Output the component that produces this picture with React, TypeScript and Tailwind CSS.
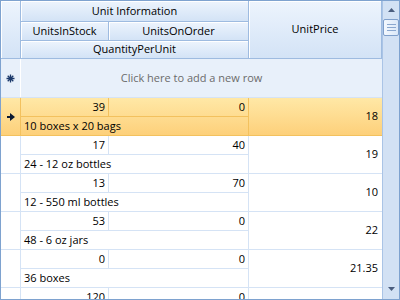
import type { ReactNode } from "react";

type Row = { stock: string; order: string; qty: string; price: string; selected?: boolean };

const rows: Row[] = [
  { stock: "39", order: "0", qty: "10 boxes x 20 bags", price: "18", selected: true },
  { stock: "17", order: "40", qty: "24 - 12 oz bottles", price: "19" },
  { stock: "13", order: "70", qty: "12 - 550 ml bottles", price: "10" },
  { stock: "53", order: "0", qty: "48 - 6 oz jars", price: "22" },
  { stock: "0", order: "0", qty: "36 boxes", price: "21.35" },
  { stock: "120", order: "0", qty: "12 - 8 oz jars", price: "25" },
];

function HeaderCell({ children, className = "" }: { children?: ReactNode; className?: string }) {
  return (
    <div
      className={`flex items-center justify-center border-r border-b border-[#9ebbe0] bg-gradient-to-b from-[#edf4fd] to-[#d3e3f6] shadow-[inset_1px_1px_0_#ffffff] ${className}`}
    >
      {children}
    </div>
  );
}

function Arrow() {
  return (
    <svg width="8" height="8" viewBox="0 0 8 8">
      <path d="M0 3h3V0l5 4-5 4V5H0z" fill="#0b1a33" />
    </svg>
  );
}

function Star() {
  return (
    <svg width="9" height="9" viewBox="0 0 9 9">
      <path
        d="M4.5 0.5v8M0.5 4.5h8M1.7 1.7l5.6 5.6M7.3 1.7l-5.6 5.6"
        stroke="#1c3a6b"
        strokeWidth="1.3"
      />
      <circle cx="4.5" cy="4.5" r="1.6" fill="#1c3a6b" />
    </svg>
  );
}

function DataRow({ row }: { row: Row }) {
  const sel = row.selected;
  const line = sel ? "border-[#f3c15e]" : "border-[#d5e3f5]";
  return (
    <div
      className={`grid h-[38px] shrink-0 grid-cols-[20px_88px_140px_133px] border-b ${line} ${
        sel ? "bg-gradient-to-b from-[#ffe8a6] to-[#fdd07a]" : "bg-white"
      }`}
    >
      <div className={`flex items-center justify-center border-r ${line}`}>{sel && <Arrow />}</div>
      <div className={`col-span-2 flex flex-col border-r ${line}`}>
        <div className={`flex h-[19px] border-b ${line}`}>
          <div className={`flex w-[88px] items-center justify-end border-r pr-[3px] ${line}`}>{row.stock}</div>
          <div className="flex flex-1 items-center justify-end pr-[3px]">{row.order}</div>
        </div>
        <div className="flex flex-1 items-center pl-[3px]">{row.qty}</div>
      </div>
      <div className="flex items-center justify-end pr-[4px]">{row.price}</div>
    </div>
  );
}

export default function App() {
  return (
    <div className="flex h-[300px] w-[400px] overflow-hidden border border-[#7ea2cf] font-['Segoe_UI','Open_Sans',sans-serif] text-[11px] text-black">
      <div className="flex w-[381px] flex-col">
        {/* Header */}
        <div className="grid shrink-0 grid-cols-[20px_88px_140px_133px] grid-rows-[21px_19px_18px]">
          <HeaderCell className="row-span-3" />
          <HeaderCell className="col-span-2">Unit Information</HeaderCell>
          <HeaderCell className="row-span-3">UnitPrice</HeaderCell>
          <HeaderCell>UnitsInStock</HeaderCell>
          <HeaderCell>UnitsOnOrder</HeaderCell>
          <HeaderCell className="col-span-2">QuantityPerUnit</HeaderCell>
        </div>

        {/* New row */}
        <div className="grid h-[39px] shrink-0 grid-cols-[20px_1fr] border-b border-[#d5e3f5] bg-[#e8f0fa]">
          <div className="flex items-center justify-center border-r border-white">
            <Star />
          </div>
          <div className="flex items-center justify-center pr-[20px] text-[#6b6b6b]">Click here to add a new row</div>
        </div>

        {rows.map((r) => (
          <DataRow key={r.qty} row={r} />
        ))}
      </div>

      {/* Scrollbar */}
      <div className="flex w-[17px] flex-col items-center border-l border-[#aac4e6] bg-[#d2e1f4]">
        <div className="flex h-[18px] items-center justify-center">
          <svg width="7" height="4" viewBox="0 0 7 4">
            <path d="M3.5 0L7 4H0z" fill="#4a5d7e" />
          </svg>
        </div>
        <div className="flex h-[17px] w-[16px] flex-col items-center justify-center gap-[2px] rounded-[2px] border border-[#7f9fcb] bg-gradient-to-r from-[#f3f8fe] to-[#dbe8f8]">
          <div className="h-px w-[9px] bg-[#8aa7cf]" />
          <div className="h-px w-[9px] bg-[#8aa7cf]" />
          <div className="h-px w-[9px] bg-[#8aa7cf]" />
        </div>
        <div className="flex-1" />
        <div className="flex h-[20px] items-center justify-center">
          <svg width="7" height="4" viewBox="0 0 7 4">
            <path d="M0 0h7L3.5 4z" fill="#4a5d7e" />
          </svg>
        </div>
      </div>
    </div>
  );
}
